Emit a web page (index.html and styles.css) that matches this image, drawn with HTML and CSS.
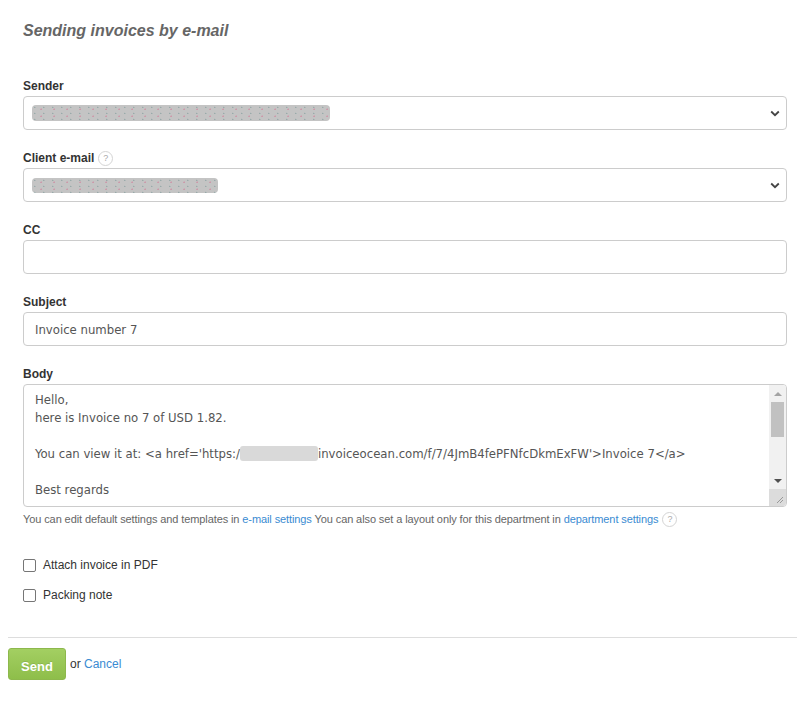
FILE: index.html
```html
<!DOCTYPE html>
<html>
<head>
<meta charset="utf-8">
<link rel="stylesheet" href="styles.css">
</head>
<body>
<div class="page">
  <form class="mail-form">
    <h2 class="title">Sending invoices by e-mail</h2>

    <div class="group first">
      <label class="lbl">Sender</label>
      <div class="field select">
        <span class="redact r-sender"></span>
        <svg class="chev" width="10" height="7" viewBox="0 0 10 7"><path d="M1.2 1.5 L5 5.2 L8.8 1.5" fill="none" stroke="#444" stroke-width="1.8"/></svg>
      </div>
    </div>

    <div class="group">
      <label class="lbl">Client e-mail <span class="help">?</span></label>
      <div class="field select">
        <span class="redact r-client"></span>
        <svg class="chev" width="10" height="7" viewBox="0 0 10 7"><path d="M1.2 1.5 L5 5.2 L8.8 1.5" fill="none" stroke="#444" stroke-width="1.8"/></svg>
      </div>
    </div>

    <div class="group">
      <label class="lbl">CC</label>
      <div class="field"></div>
    </div>

    <div class="group">
      <label class="lbl">Subject</label>
      <div class="field text">Invoice number 7</div>
    </div>

    <div class="group body-group">
      <label class="lbl">Body</label>
      <div class="area">
        <div class="area-text">
          <div class="ln">Hello,</div>
          <div class="ln">here is Invoice no 7 of USD 1.82.</div>
          <div class="ln">&nbsp;</div>
          <div class="ln">You can view it at: &lt;a href='https:/<span class="redact r-url"></span>invoiceocean.com/f/7/4JmB4fePFNfcDkmExFW'&gt;Invoice 7&lt;/a&gt;</div>
          <div class="ln">&nbsp;</div>
          <div class="ln">Best regards</div>
        </div>
        <div class="sbar">
          <div class="sb-btn"><span class="tri up"></span></div>
          <div class="sb-track"><div class="sb-thumb"></div></div>
          <div class="sb-btn"><span class="tri down"></span></div>
          <div class="sb-corner">
            <svg width="17" height="17" viewBox="0 0 17 17"><path d="M14 8 L8 14 M14 11 L11 14" stroke="#999" stroke-width="1"/></svg>
          </div>
        </div>
      </div>
      <p class="hint">You can edit default settings and templates in <a class="link" href="#">e-mail settings</a> You can also set a layout only for this department in <a class="link" href="#">department settings</a> <span class="help">?</span></p>
    </div>

    <div class="checks">
      <label class="chk"><span class="box"></span>Attach invoice in PDF</label>
      <label class="chk"><span class="box"></span>Packing note</label>
    </div>
  </form>

  <div class="actions">
    <button type="button" class="send">Send</button>
    <span class="or">or <a class="link" href="#">Cancel</a></span>
  </div>
</div>
</body>
</html>
```

FILE: styles.css
```css
html, body {
  margin: 0;
  padding: 0;
  background: #fff;
}
body {
  margin: 8px 0 8px 8px;
  font-family: "Liberation Sans", Arial, sans-serif;
  color: #333;
}
.mail-form {
  padding: 0 11px 0 15px;
}
.title {
  margin: 13px 0 0;
  font-size: 16px;
  line-height: 20px;
  font-style: italic;
  font-weight: bold;
  color: #666;
}
.group {
  display: flex;
  flex-direction: column;
  margin-top: 20px;
}
.group.first {
  margin-top: 37px;
}
.lbl {
  display: flex;
  align-items: center;
  gap: 4px;
  font-size: 12px;
  line-height: 16px;
  font-weight: bold;
  color: #333;
  margin-bottom: 2px;
}
.help {
  display: inline-flex;
  align-items: center;
  justify-content: center;
  width: 13px;
  height: 13px;
  border: 1px solid #d4d4d4;
  border-radius: 50%;
  font-size: 9px;
  font-weight: normal;
  color: #aaa;
  line-height: 1;
  vertical-align: middle;
}
.field {
  height: 34px;
  box-sizing: border-box;
  border: 1px solid #ccc;
  border-radius: 4px;
  background: #fff;
  display: flex;
  align-items: center;
  padding: 0 11px;
}
.field.text {
  font-family: "DejaVu Sans", sans-serif;
  font-stretch: condensed;
  font-size: 13px;
  color: #555;
}
.select {
  justify-content: space-between;
  padding: 0 6px 0 8px;
}
.chev {
  display: block;
}
.redact {
  display: inline-block;
  background: #c4c4c4;
  border-radius: 4px;
  background-image: radial-gradient(circle at 30% 40%, #9aa 0.6px, transparent 1px),
                    radial-gradient(circle at 70% 60%, #c9a 0.6px, transparent 1px);
  background-size: 9px 6px, 13px 7px;
}
.r-sender {
  width: 298px;
  height: 16px;
}
.r-client {
  width: 186px;
  height: 15px;
}
.r-url {
  width: 78px;
  height: 15px;
  vertical-align: -3px;
  background-color: #d2d2d2;
  background-image: none;
  border-radius: 3px;
  opacity: 0.85;
}
.area {
  height: 123px;
  box-sizing: border-box;
  border: 1px solid #ccc;
  border-radius: 4px;
  display: flex;
  overflow: hidden;
}
.area-text {
  flex: 1;
  padding: 6px 11px;
  font-family: "DejaVu Sans", sans-serif;
  font-stretch: condensed;
  font-size: 13px;
  line-height: 18px;
  color: #555;
  white-space: nowrap;
  overflow: hidden;
}
.sbar {
  width: 17px;
  background: #f1f1f1;
  display: flex;
  flex-direction: column;
}
.sb-btn {
  height: 17px;
  display: flex;
  align-items: center;
  justify-content: center;
}
.tri {
  width: 0;
  height: 0;
  border-left: 4px solid transparent;
  border-right: 4px solid transparent;
}
.tri.up {
  border-bottom: 4px solid #a3a3a3;
}
.tri.down {
  border-top: 4px solid #505050;
}
.sb-track {
  flex: 1;
  display: flex;
  flex-direction: column;
  padding: 0 2px;
}
.sb-thumb {
  height: 35px;
  background: #c1c1c1;
}
.sb-corner {
  height: 17px;
  background: #dcdcdc;
}
.sb-corner svg {
  display: block;
}
.hint {
  margin: 4px 0 0;
  font-size: 11px;
  line-height: 16px;
  letter-spacing: -0.1px;
  color: #666;
  display: flex;
  align-items: center;
  white-space: pre;
}
.hint .help {
  margin-left: 4px;
  letter-spacing: 0;
}
.link {
  color: #3a8bd2;
  text-decoration: none;
}
.checks {
  margin-top: 30px;
  display: flex;
  flex-direction: column;
  gap: 14px;
}
.chk {
  display: flex;
  align-items: center;
  font-size: 12px;
  line-height: 16px;
  color: #333;
}
.box {
  width: 13px;
  height: 13px;
  box-sizing: border-box;
  border: 1px solid #767676;
  border-radius: 2px;
  margin-right: 7px;
}
.actions {
  margin-top: 34px;
  margin-right: 1px;
  border-top: 1px solid #ddd;
  padding-top: 10px;
  display: flex;
  align-items: center;
  gap: 4px;
}
.send {
  width: 58px;
  height: 32px;
  border: 1px solid #8db84c;
  border-radius: 3px;
  background: linear-gradient(#a3cf62, #8ebe4a);
  color: #fff;
  font-family: "Liberation Sans", Arial, sans-serif;
  font-size: 13px;
  font-weight: bold;
  text-shadow: 0 -1px 0 rgba(0,0,0,0.1);
  padding: 4px 0 0;
}
.or {
  font-size: 12px;
  color: #333;
  margin-top: 0;
}
```
